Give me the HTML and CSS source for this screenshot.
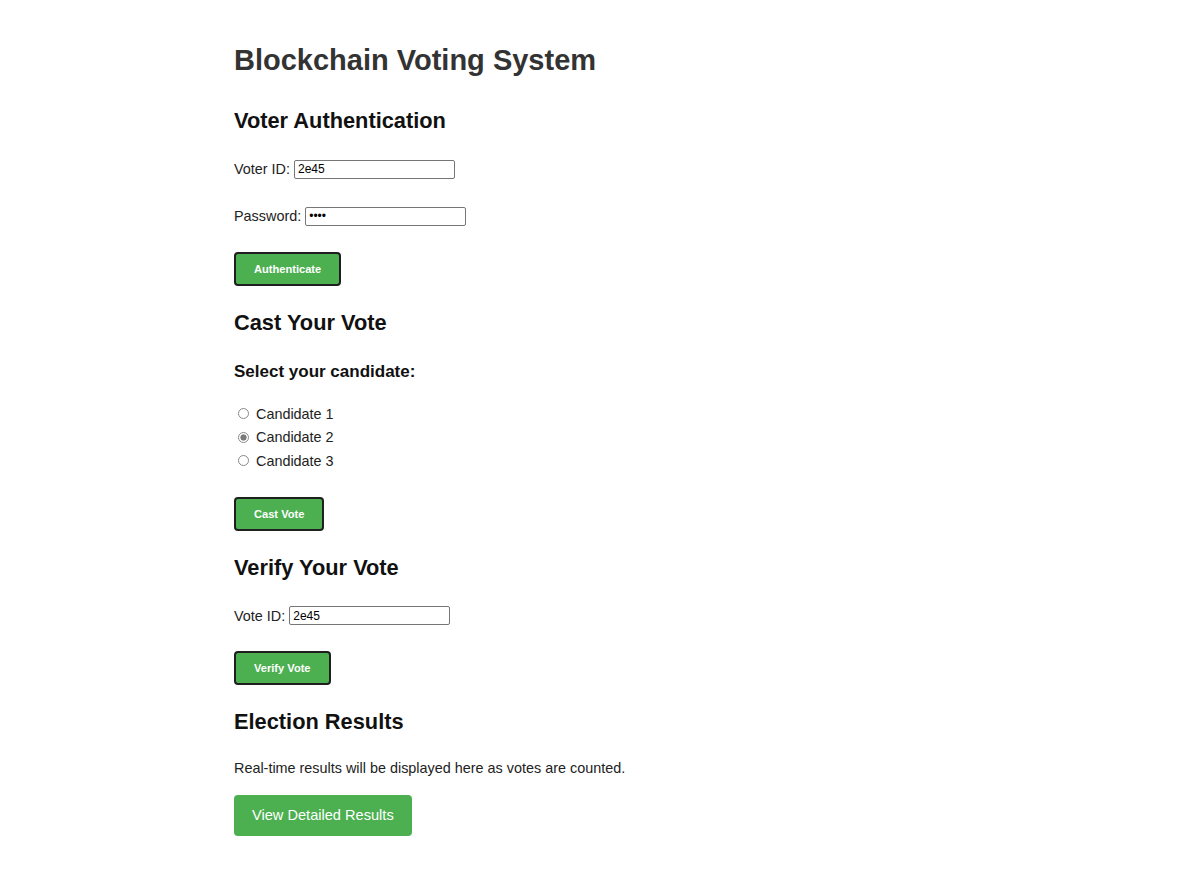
FILE: index.html
```html
<!DOCTYPE html>
<html>
<head>
<meta charset="utf-8">
<title>Blockchain Voting System</title>
<link rel="stylesheet" href="styles.css">
</head>
<body>
<main class="container">
  <h1 class="title">Blockchain Voting System</h1>

  <section class="section">
    <h2 class="section-title">Voter Authentication</h2>
    <div class="field">
      <label class="field-label" for="voterId">Voter ID:</label>
      <input class="text-input" id="voterId" type="text" value="2e45">
    </div>
    <div class="field">
      <label class="field-label" for="password">Password:</label>
      <input class="text-input" id="password" type="password" value="abcd">
    </div>
    <button class="btn btn-outline">Authenticate</button>
  </section>

  <section class="section">
    <h2 class="section-title">Cast Your Vote</h2>
    <h3 class="sub-title">Select your candidate:</h3>
    <div class="radio-list">
      <label class="radio-row"><input class="radio" type="radio" name="candidate"> Candidate 1</label>
      <label class="radio-row"><input class="radio" type="radio" name="candidate" checked> Candidate 2</label>
      <label class="radio-row"><input class="radio" type="radio" name="candidate"> Candidate 3</label>
    </div>
    <button class="btn btn-outline">Cast Vote</button>
  </section>

  <section class="section">
    <h2 class="section-title">Verify Your Vote</h2>
    <div class="field field-tight">
      <label class="field-label" for="voteId">Vote ID:</label>
      <input class="text-input" id="voteId" type="text" value="2e45">
    </div>
    <button class="btn btn-outline">Verify Vote</button>
  </section>

  <section class="section">
    <h2 class="section-title">Election Results</h2>
    <p class="results-text">Real-time results will be displayed here as votes are counted.</p>
    <button class="btn btn-flat">View Detailed Results</button>
  </section>
</main>
</body>
</html>
```

FILE: styles.css
```css
html, body {
  margin: 0;
  padding: 0;
  background: #ffffff;
}

body {
  font-family: "Liberation Sans", Arial, sans-serif;
  font-size: 14.4px;
  color: #222;
}

.container {
  width: 716px;
  margin: 0 auto;
  padding-top: 44px;
  padding-bottom: 30px;
  display: flex;
  flex-direction: column;
}

.title {
  margin: 0;
  font-size: 29px;
  line-height: 32px;
  font-weight: bold;
  color: #333;
}

.section {
  display: flex;
  flex-direction: column;
  align-items: flex-start;
}

.section-title {
  margin: 24px 0 25px;
  font-size: 21.8px;
  line-height: 26px;
  font-weight: bold;
  color: #111;
}

.title + .section .section-title {
  margin-top: 32px;
}

.field {
  display: flex;
  align-items: center;
  height: 20px;
  margin-bottom: 27px;
}

.field + .btn {
  margin-top: -1px;
}

.field-tight {
  margin-bottom: 26px;
}

.field-label {
  margin-right: 4px;
  line-height: 18px;
}

.text-input {
  box-sizing: border-box;
  width: 161px;
  height: 19px;
  padding: 1px 3px;
  border: 1px solid #767676;
  border-radius: 2px;
  font-family: "Liberation Sans", Arial, sans-serif;
  font-size: 12px;
  color: #000;
}

.sub-title {
  margin: 1px 0 20px;
  font-size: 17px;
  line-height: 20px;
  font-weight: bold;
  color: #111;
}

.radio-list {
  display: flex;
  flex-direction: column;
  margin-bottom: 24px;
}

.radio-row {
  display: flex;
  align-items: center;
  height: 23.5px;
  line-height: 18px;
}

.radio {
  appearance: none;
  -webkit-appearance: none;
  box-sizing: border-box;
  width: 11px;
  height: 11px;
  margin: 0 7px 0 4px;
  border: 1px solid #8a8a8a;
  border-radius: 50%;
  background: #fff;
}

.radio:checked {
  background: radial-gradient(circle, #7a7a7a 0 2.8px, #fff 3.4px);
}

.btn {
  font-family: "Liberation Sans", Arial, sans-serif;
  color: #fff;
  background: #4caf50;
  cursor: pointer;
}

.btn-outline {
  box-sizing: border-box;
  height: 34px;
  padding: 0 18px;
  font-size: 11.1px;
  font-weight: bold;
  border: 2px solid #1f1f1f;
  border-radius: 4px;
}

.btn-flat {
  box-sizing: border-box;
  height: 41px;
  padding: 0 18px;
  font-size: 14.6px;
  border: none;
  border-radius: 4px;
}

.results-text {
  margin: -1px 0 18px;
  line-height: 18px;
}
```
